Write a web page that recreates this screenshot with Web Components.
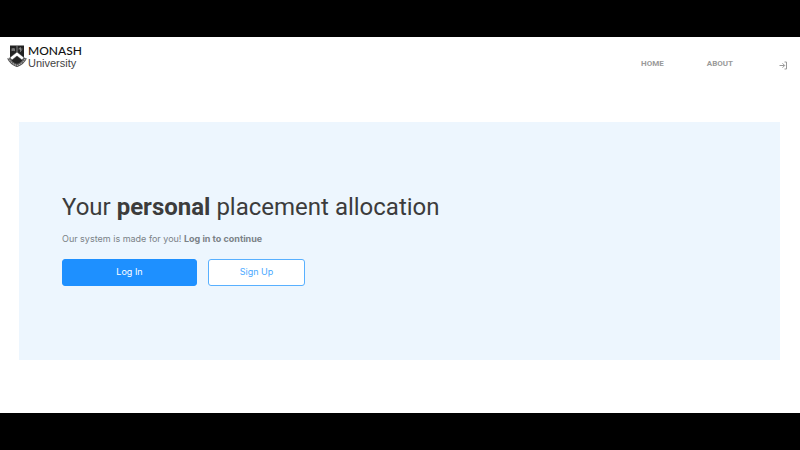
<!DOCTYPE html>
<html lang="en">
<head>
<meta charset="utf-8">
<title>Monash University placement allocation</title>
<style>
body{margin:0;background:#000;font-family:Roboto,sans-serif}
</style>
</head>
<body>
<placement-page>
  <site-header slot="header">
    <university-logo></university-logo>
    <nav-link href="#home">HOME</nav-link>
    <nav-link href="#about">ABOUT</nav-link>
    <login-icon></login-icon>
  </site-header>
  <hero-banner>
    <span slot="title">Your <b>personal</b> placement allocation</span>
    <span slot="text">Our system is made for you! <b>Log in to continue</b></span>
    <action-button slot="actions" kind="primary">Log In</action-button>
    <action-button slot="actions">Sign Up</action-button>
  </hero-banner>
</placement-page>
<script>
const define = (name, html) => customElements.define(name, class extends HTMLElement {
  constructor() {
    super();
    this.attachShadow({mode: 'open'}).innerHTML = html;
  }
  connectedCallback() {
    const a = this.shadowRoot.querySelector('a[data-link]');
    if (a) a.href = this.getAttribute('href');
  }
});

define('placement-page', `<style>
:host{display:flex;flex-direction:column;box-sizing:border-box;min-height:100vh;padding:37px 0}
.page{flex:1;display:flex;flex-direction:column;background:#fff}
main{flex:1;display:flex;flex-direction:column;padding:32px 20px 53px 19px}
</style><div class="page"><slot name="header"></slot><main><slot></slot></main></div>`);

define('site-header', `<style>
:host{display:block}
header{display:flex;align-items:center;height:53px}
nav{display:contents}
::slotted(university-logo){margin:0 auto 14px 7px}
::slotted(nav-link){margin:0 43px 0 0}
::slotted(login-icon){margin:4px 12px 0 3px}
</style><header><nav aria-label="Main"><slot></slot></nav></header>`);

define('university-logo', `<style>
:host{display:block}
a{display:flex;align-items:center;gap:1px;color:#222;text-decoration:none}
svg{display:block;width:20px;height:24px}
.name{display:flex;flex-direction:column}
.top{font:500 12px/12px Lato,sans-serif;color:#111}
.bottom{font:11px/12px "Liberation Sans",sans-serif;color:#444}
</style><a href="#home" aria-label="Monash University"><svg viewBox="0 0 20 24" aria-hidden="true">
<path d="M3 .5H17V11C17 16 13.500 18 10 20C6.500 18 3 16 3 11Z" fill="#222"/>
<path d="M10 1V8" stroke="#aaa" stroke-width=".7"/>
<path d="M4.500 3.500L6.200 3L8 3.500V6.300L6.200 5.800L4.500 6.300Z" fill="#777"/>
<path d="M13.500 2.200V7M11.500 4H15.500M12 2.800L15 5.700" stroke="#999" stroke-width=".7"/>
<path d="M3.300 12.300L10 7L16.700 12.300L15 15L10 11L5 15Z" fill="#fff"/>
<path d="M3.300 12.300L10 7L16.700 12.300M5 15L10 11L15 15" fill="none" stroke="#333" stroke-width=".5"/>
<path d="M1.500 13Q4 18.500 10 20.500Q16 18.500 18.500 13" fill="none" stroke="#555" stroke-width="3"/>
<path d="M1.500 13Q4 18.500 10 20.500Q16 18.500 18.500 13" fill="none" stroke="#ddd" stroke-width=".9" stroke-dasharray="1.500 .8"/>
</svg><span class="name"><span class="top">MONASH</span><span class="bottom">University</span></span></a>`);

define('nav-link', `<style>
:host{display:block}
a{display:block;color:#9a9a9a;font-size:8px;line-height:12px;font-weight:700;text-decoration:none}
</style><a data-link><slot></slot></a>`);

define('login-icon', `<style>
:host{display:block}
a{display:block;color:#999}
svg{display:block;width:9px;height:9px}
</style><a href="#login" aria-label="Log in"><svg viewBox="0 0 9 9" fill="none" stroke="currentColor" stroke-width="1" aria-hidden="true"><path d="M.5 4.500H5.500M3.500 2.300L5.700 4.500L3.500 6.700M5.500 1H7.500V8H5.500"/></svg></a>`);

define('hero-banner', `<style>
:host{flex:1;display:flex;flex-direction:column;justify-content:center;background:#edf6fe;padding:0 43px 6px}
h1{margin:0;color:#3c3c3c;font-size:24px;line-height:32px;font-weight:400}
p{margin:8px 0 12px;color:#7b8287;font:9px/16px Inter,sans-serif}
.actions{display:flex;gap:11px}
</style><h1><slot name="title"></slot></h1><p><slot name="text"></slot></p><div class="actions"><slot name="actions"></slot></div>`);

define('action-button', `<style>
:host{display:flex;width:97px}
:host([kind=primary]){width:135px}
button{flex:1;height:27px;padding:0;border:1px solid #58b0ff;border-radius:3px;background:#fff;color:#4ba9ff;font:9px/12px Inter,sans-serif}
:host([kind=primary]) button{border-color:#1e90ff;background:#1e90ff;color:#fff}
</style><button type="button"><slot></slot></button>`);
</script>
</body>
</html>
